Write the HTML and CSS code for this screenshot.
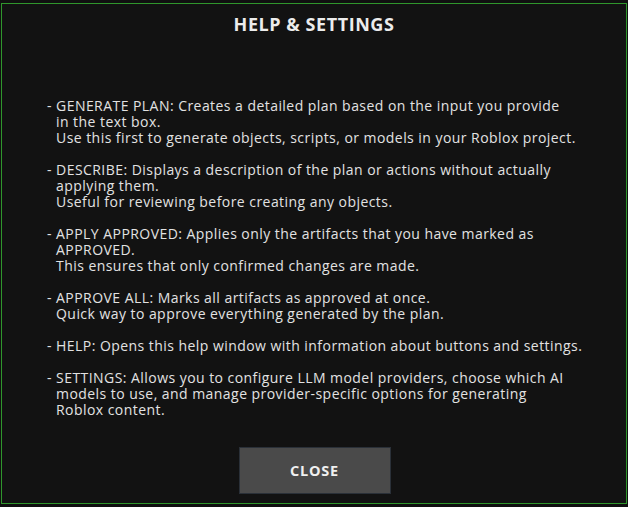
FILE: index.html
```html
<!DOCTYPE html>
<html>
<head>
<meta charset="utf-8">
<link rel="stylesheet" href="styles.css">
</head>
<body>
<div class="dialog">
  <h1 class="title">HELP &amp; SETTINGS</h1>
  <div class="help">
    <p class="item"><span class="line">- GENERATE PLAN: Creates a detailed plan based on the input you provide</span><span class="line cont">in the text box.</span><span class="line cont">Use this first to generate objects, scripts, or models in your Roblox project.</span></p>
    <p class="item"><span class="line">- DESCRIBE: Displays a description of the plan or actions without actually</span><span class="line cont">applying them.</span><span class="line cont">Useful for reviewing before creating any objects.</span></p>
    <p class="item"><span class="line">- APPLY APPROVED: Applies only the artifacts that you have marked as</span><span class="line cont">APPROVED.</span><span class="line cont">This ensures that only confirmed changes are made.</span></p>
    <p class="item"><span class="line">- APPROVE ALL: Marks all artifacts as approved at once.</span><span class="line cont">Quick way to approve everything generated by the plan.</span></p>
    <p class="item"><span class="line">- HELP: Opens this help window with information about buttons and settings.</span></p>
    <p class="item"><span class="line">- SETTINGS: Allows you to configure LLM model providers, choose which AI</span><span class="line cont">models to use, and manage provider-specific options for generating</span><span class="line cont">Roblox content.</span></p>
  </div>
  <div class="actions">
    <button class="close">CLOSE</button>
  </div>
</div>
</body>
</html>
```

FILE: styles.css
```css
html, body {
  margin: 0;
  padding: 0;
  background: #101010;
  width: 628px;
  height: 507px;
  overflow: hidden;
}
body {
  padding: 3px 1px 0 1px;
  box-sizing: border-box;
}
.dialog {
  width: 626px;
  height: 501px;
  box-sizing: border-box;
  border: 1px solid #2f962c;
  background: #121212;
  display: flex;
  flex-direction: column;
  font-family: "Open Sans", "Noto Sans", sans-serif;
  color: #e2e2e2;
}
.title {
  margin: 0;
  padding-top: 8px;
  height: 24px;
  line-height: 24px;
  text-align: center;
  font-size: 18px;
  font-weight: 700;
  color: #ececec;
  letter-spacing: 0.55px;
}
.help {
  padding: 62px 0 0 45px;
  font-size: 14px;
  line-height: 16px;
  letter-spacing: 0.45px;
}
.item {
  margin: 0 0 16px 0;
}
.line {
  display: block;
  white-space: pre;
}
.cont {
  padding-left: 9px;
}
.actions {
  display: flex;
  justify-content: center;
  margin-top: 13px;
  padding-left: 1px;
}
.close {
  width: 152px;
  height: 47px;
  background: #4a4a4a;
  border: 1px solid #2a3038;
  color: #f0f0f0;
  font-family: "Open Sans", "Noto Sans", sans-serif;
  font-weight: 700;
  font-size: 14.5px;
  letter-spacing: 0.8px;
  padding: 0;
}
```
